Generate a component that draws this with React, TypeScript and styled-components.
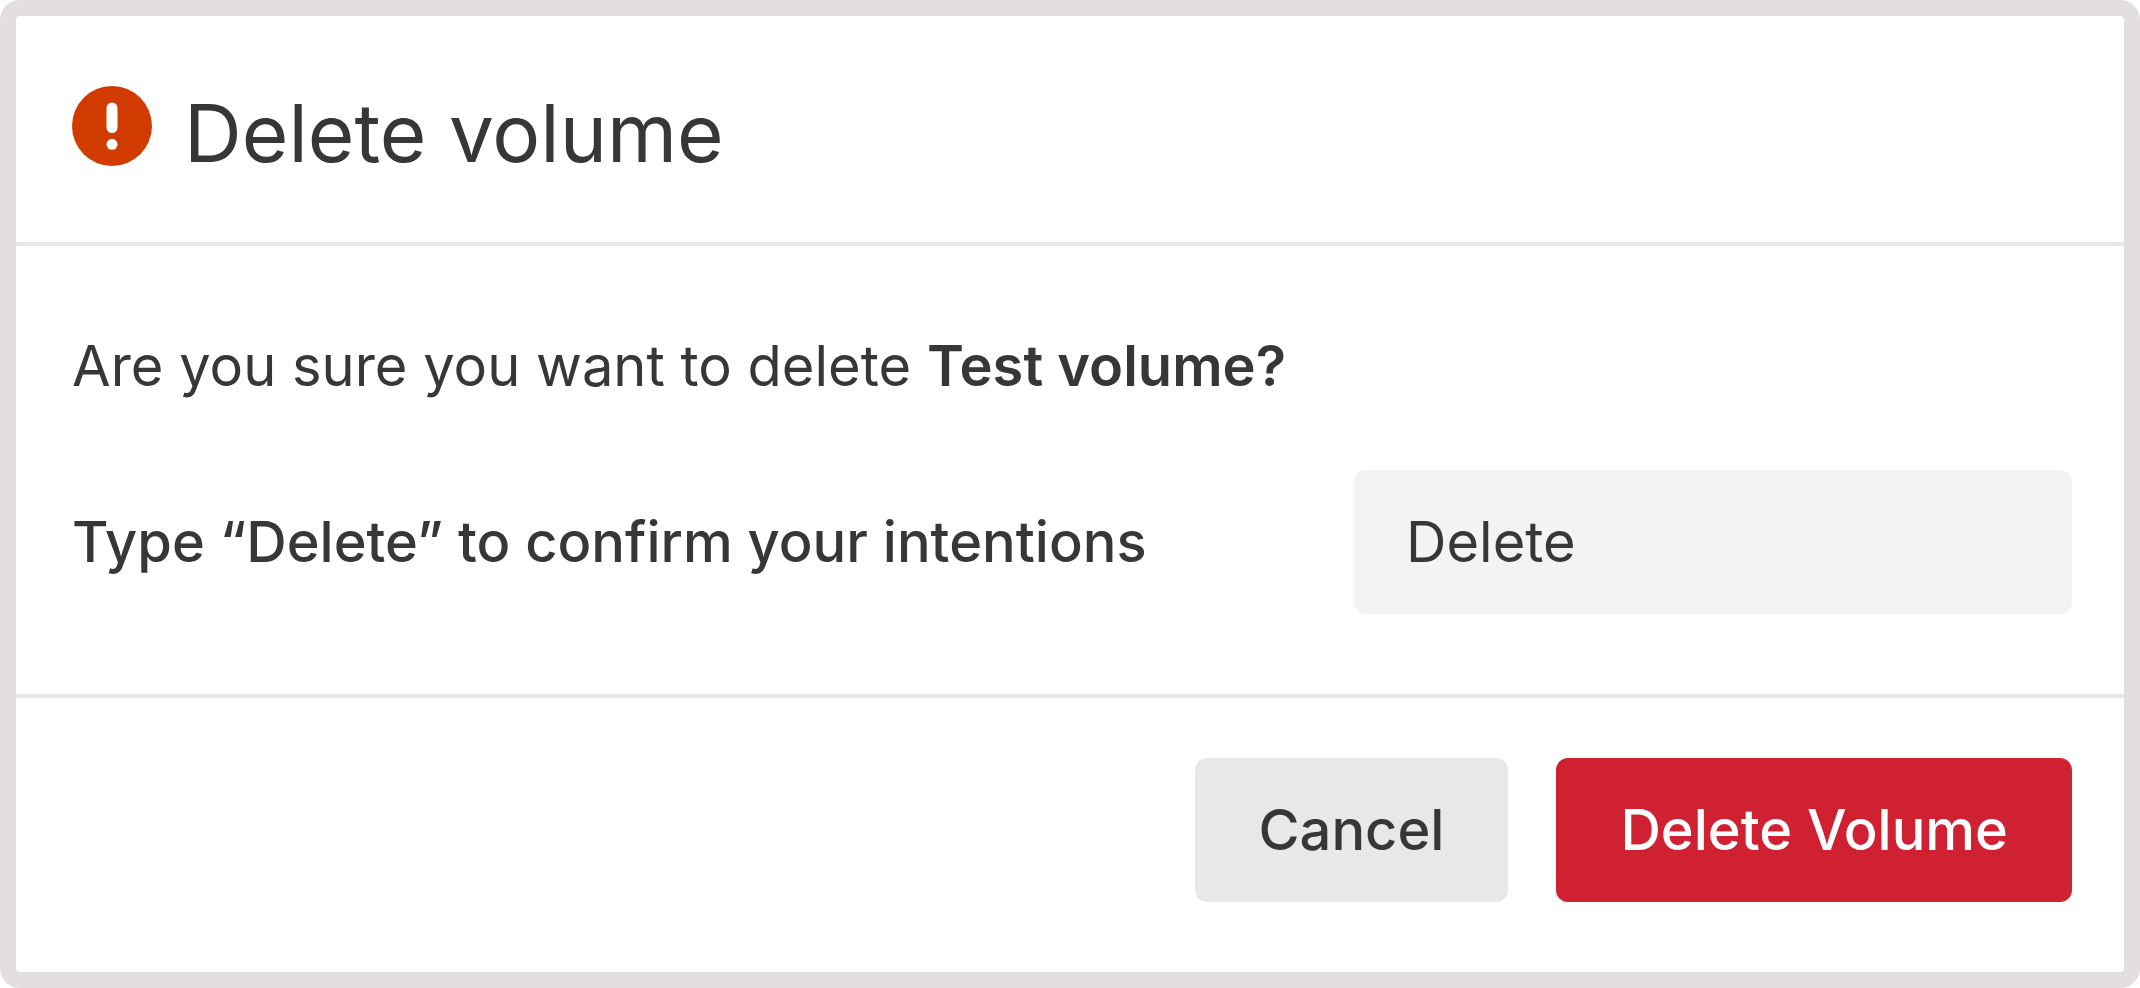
import React, { useState } from "react";
import styled, { createGlobalStyle } from "styled-components";

const GlobalStyle = createGlobalStyle`
  *, *::before, *::after { box-sizing: border-box; }
  body {
    margin: 0;
    background: #ffffff;
    color: #373737;
    font-family: Inter, "Liberation Sans", sans-serif;
  }
`;

const Dialog = styled.main`
  display: flex;
  flex-direction: column;
  min-height: 100vh;
  border: 16px solid #e3dfde;
  border-radius: 20px;
  background: #ffffff;
`;

const Header = styled.header`
  display: flex;
  align-items: flex-start;
  gap: 32px;
  padding: 70px 56px 62px;
  border-bottom: 4px solid #e8e8e8;
`;

const AlertIcon = styled.svg`
  width: 80px;
  height: 80px;
  flex: none;
`;

const Title = styled.h1`
  margin: 0;
  font-size: 80px;
  line-height: 94px;
  font-weight: 400;
`;

const Body = styled.section`
  padding: 88px 52px 80px 56px;
  border-bottom: 4px solid #e8e8e8;
`;

const Question = styled.p`
  margin: 0 0 72px;
  font-size: 56px;
  line-height: 64px;
`;

const VolumeName = styled.strong`
  font-weight: 600;
`;

const ConfirmRow = styled.div`
  display: flex;
  align-items: center;
  justify-content: space-between;
`;

const Label = styled.label`
  font-size: 56px;
  line-height: 64px;
  font-weight: 500;
`;

const Input = styled.input`
  width: 718px;
  height: 144px;
  padding: 0 52px;
  border: 0;
  border-radius: 12px;
  background: #f3f3f3;
  color: #373737;
  font: inherit;
  font-size: 56px;
`;

const Footer = styled.footer`
  display: flex;
  justify-content: flex-end;
  gap: 48px;
  padding: 60px 52px;
`;

const Button = styled.button<{ $danger?: boolean }>`
  height: 144px;
  padding: 0 64px;
  border: 0;
  border-radius: 12px;
  background: ${(p) => (p.$danger ? "#cf2131" : "#e8e8e8")};
  color: ${(p) => (p.$danger ? "#ffffff" : "#373737")};
  font: inherit;
  font-size: 56px;
  font-weight: 500;
  cursor: pointer;
`;

export default function App() {
  const [value, setValue] = useState("Delete");
  return (
    <>
      <GlobalStyle />
      <Dialog role="dialog" aria-labelledby="dialog-title">
        <Header>
          <AlertIcon viewBox="0 0 80 80" aria-hidden="true">
            <circle cx="40" cy="40" r="40" fill="#d13b00" />
            <path d="M40 22V41.5" stroke="#fff" strokeWidth="11" strokeLinecap="round" />
            <circle cx="40" cy="58.3" r="5.5" fill="#fff" />
          </AlertIcon>
          <Title id="dialog-title">Delete volume</Title>
        </Header>
        <Body>
          <Question>
            Are you sure you want to delete <VolumeName>Test volume?</VolumeName>
          </Question>
          <ConfirmRow>
            <Label htmlFor="confirm">Type “Delete” to confirm your intentions</Label>
            <Input id="confirm" type="text" value={value} onChange={(e) => setValue(e.target.value)} />
          </ConfirmRow>
        </Body>
        <Footer>
          <Button type="button">Cancel</Button>
          <Button type="button" $danger>Delete Volume</Button>
        </Footer>
      </Dialog>
    </>
  );
}
